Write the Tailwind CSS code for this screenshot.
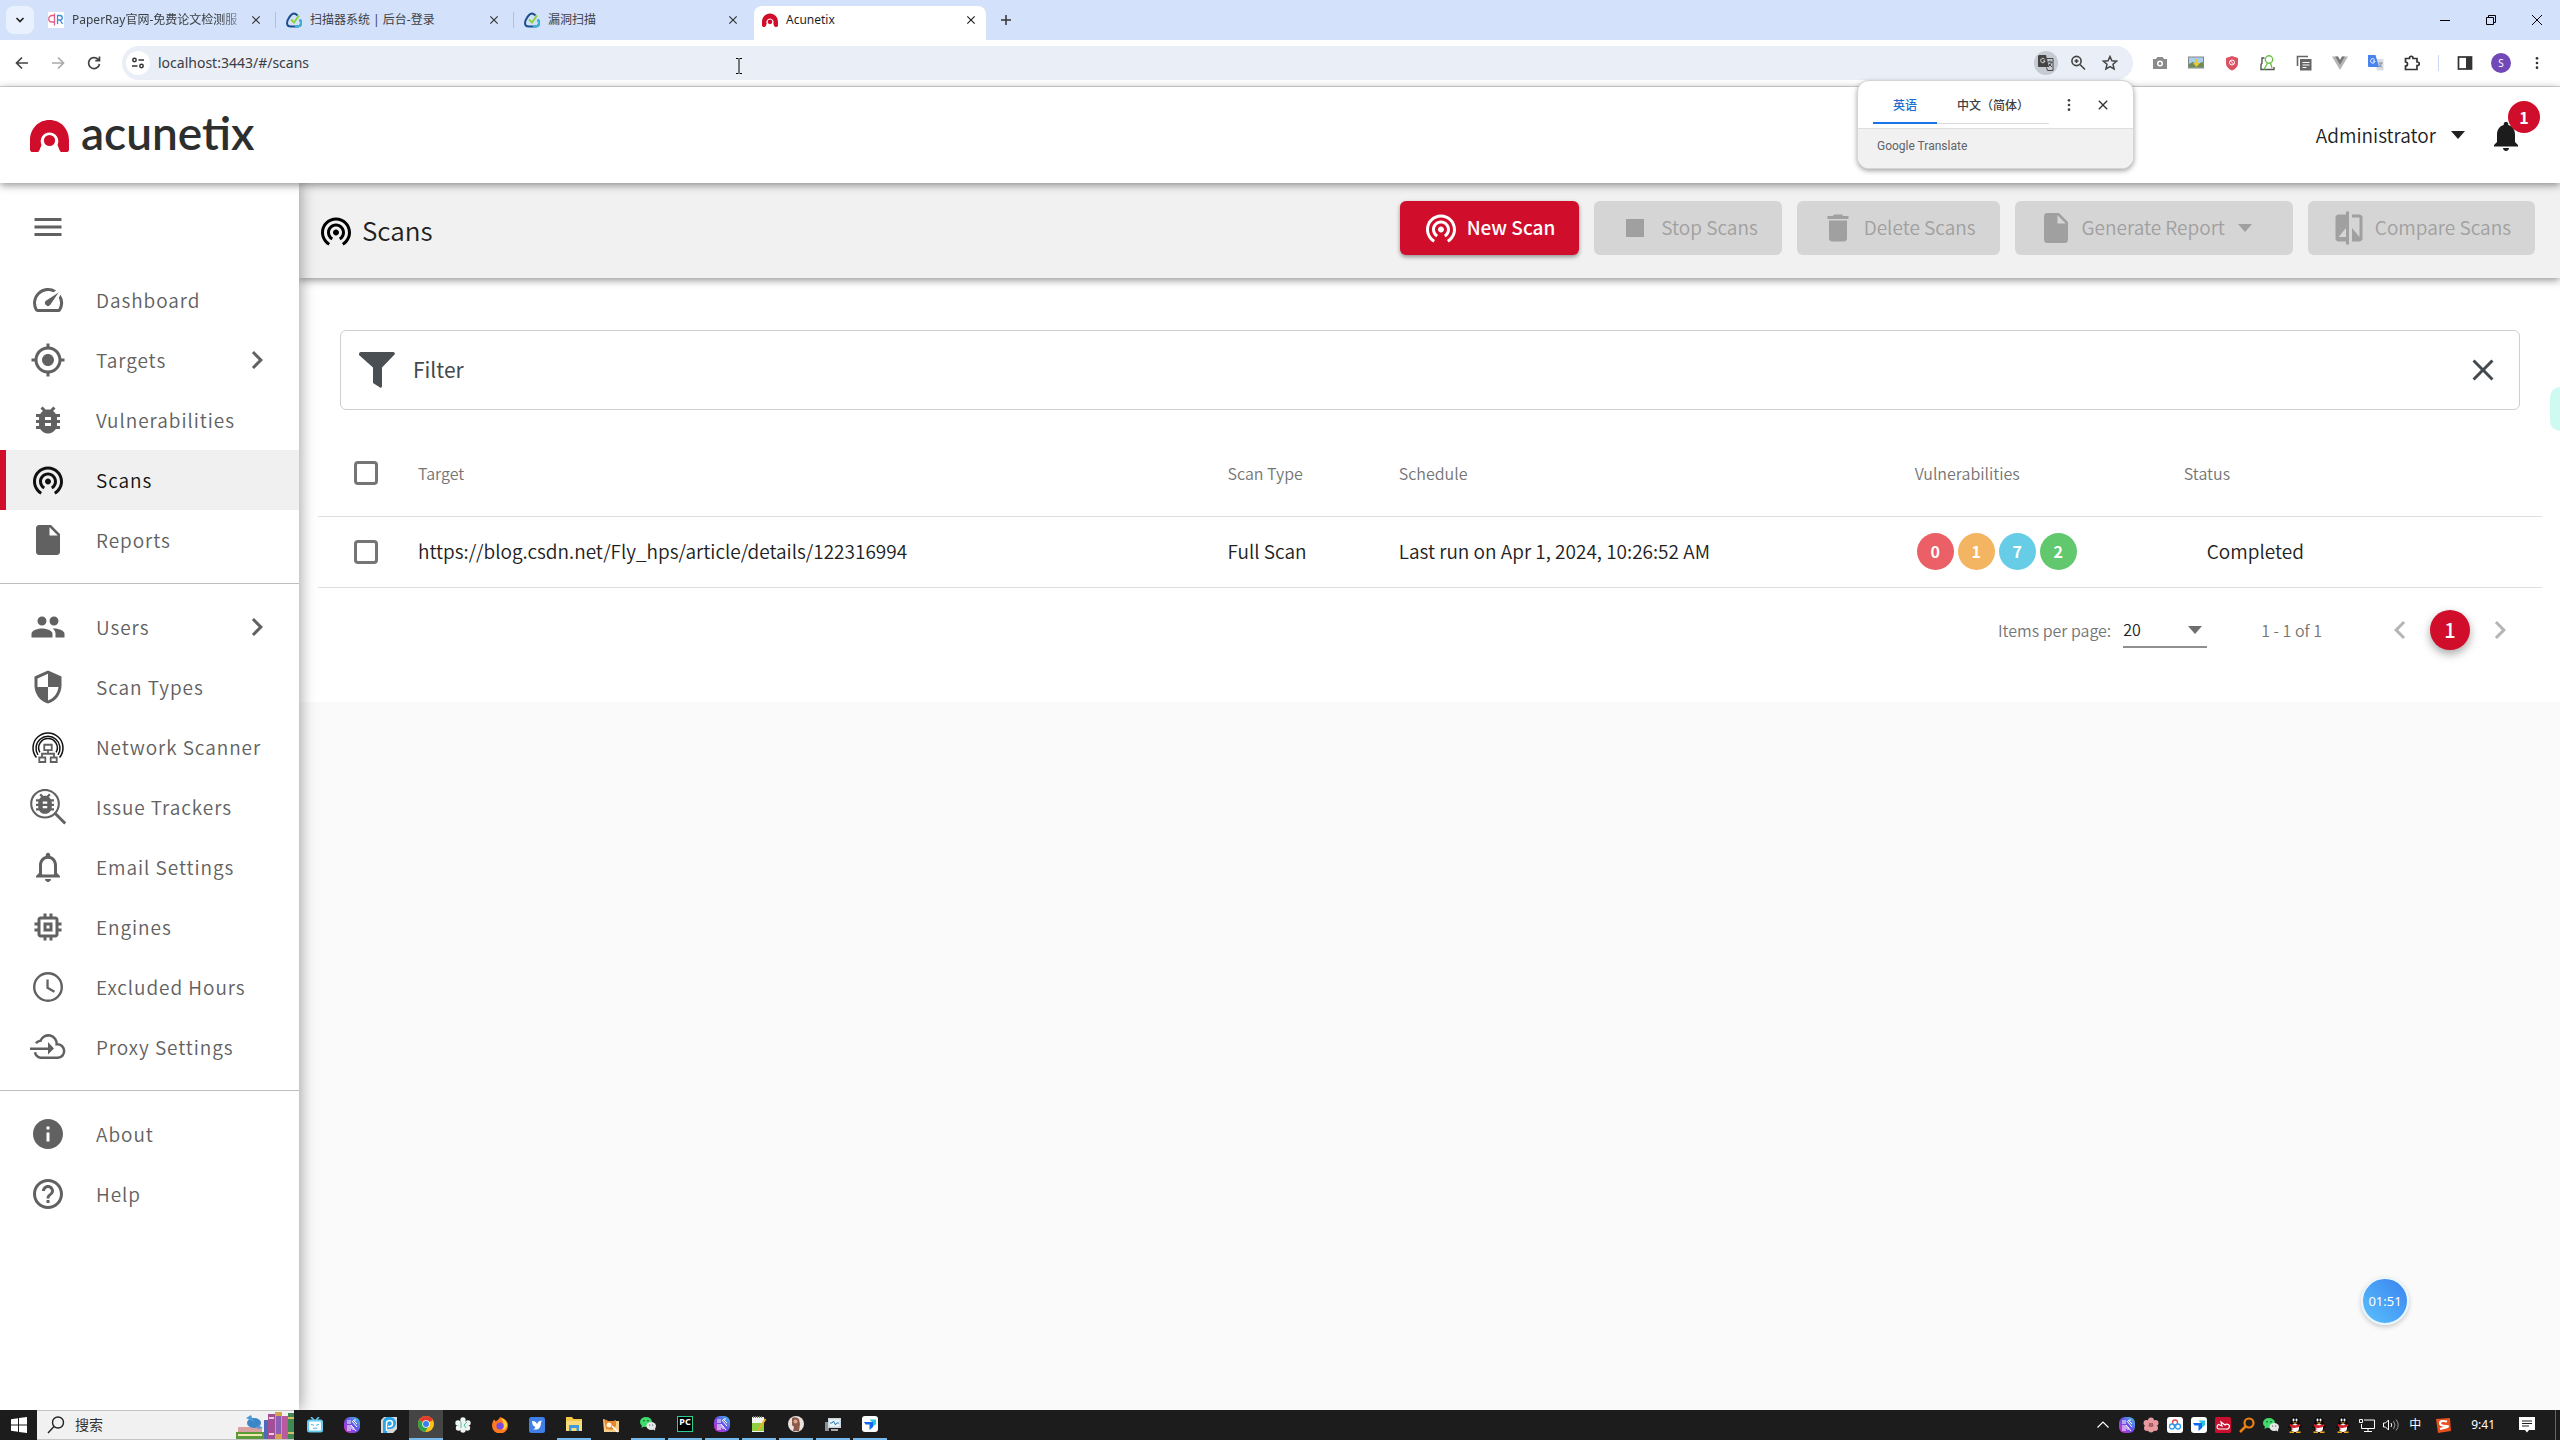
<!DOCTYPE html>
<html lang="en">
<head>
<meta charset="utf-8">
<title>Acunetix</title>
<script src="https://cdn.jsdelivr.net/npm/@tailwindcss/browser@4"></script>
</head>
<body class="min-h-screen flex flex-col bg-[#fafafa] font-['Noto_Sans_CJK_SC',sans-serif] text-[#212121]">

<svg class="absolute w-0 h-0" aria-hidden="true">
  <defs><linearGradient id="wg" x1="0" y1="1" x2="1" y2="0"><stop offset="0" stop-color="#d433c8"/><stop offset=".5" stop-color="#6a4ce8"/><stop offset="1" stop-color="#3cc6ea"/></linearGradient></defs>
  <symbol id="menu" viewBox="0 0 24 24"><path d="M3 18h18v-2H3v2zm0-5h18v-2H3v2zm0-7v2h18V6H3z"/></symbol>
  <symbol id="speed" viewBox="0 0 24 24"><path d="M20.38 8.57l-1.23 1.85a8 8 0 0 1-.22 7.58H5.07A8 8 0 0 1 15.58 6.85l1.85-1.23A10 10 0 0 0 3.35 19a2 2 0 0 0 1.72 1h13.85a2 2 0 0 0 1.74-1 10 10 0 0 0-.27-10.44zm-9.79 6.84a2 2 0 0 0 2.83 0l5.66-8.49-8.49 5.66a2 2 0 0 0 0 2.83z"/></symbol>
  <symbol id="target" viewBox="0 0 24 24"><path d="M12 8c-2.21 0-4 1.79-4 4s1.79 4 4 4 4-1.79 4-4-1.79-4-4-4zm8.94 3c-.46-4.17-3.77-7.48-7.94-7.94V1h-2v2.06C6.83 3.52 3.52 6.83 3.06 11H1v2h2.06c.46 4.17 3.77 7.48 7.94 7.94V23h2v-2.06c4.17-.46 7.48-3.77 7.94-7.94H23v-2h-2.06zM12 19c-3.87 0-7-3.13-7-7s3.13-7 7-7 7 3.13 7 7-3.13 7-7 7z"/></symbol>
  <symbol id="bug" viewBox="0 0 24 24"><path d="M20 8h-2.81c-.45-.78-1.07-1.45-1.82-1.96L17 4.41 15.59 3l-2.17 2.17C12.96 5.06 12.49 5 12 5s-.96.06-1.41.17L8.41 3 7 4.41l1.62 1.63C7.88 6.55 7.26 7.22 6.81 8H4v2h2.09c-.05.33-.09.66-.09 1v1H4v2h2v1c0 .34.04.67.09 1H4v2h2.81c1.04 1.79 2.97 3 5.19 3s4.15-1.21 5.19-3H20v-2h-2.09c.05-.33.09-.66.09-1v-1h2v-2h-2v-1c0-.34-.04-.67-.09-1H20V8zm-6 8h-4v-2h4v2zm0-4h-4v-2h4v2z"/></symbol>
  <symbol id="scan" viewBox="0 0 24 24"><path d="M12 11c-1.1 0-2 .9-2 2s.9 2 2 2 2-.9 2-2-.9-2-2-2zm6 2c0-3.31-2.69-6-6-6s-6 2.69-6 6c0 2.22 1.21 4.15 3 5.19l1-1.74c-1.19-.7-2-1.97-2-3.45 0-2.21 1.79-4 4-4s4 1.79 4 4c0 1.48-.81 2.75-2 3.45l1 1.74c1.79-1.04 3-2.97 3-5.19zM12 3C6.48 3 2 7.48 2 13c0 3.7 2.01 6.92 4.99 8.65l1-1.73C5.61 18.53 4 15.96 4 13c0-4.42 3.58-8 8-8s8 3.58 8 8c0 2.96-1.61 5.53-4 6.92l1 1.73c2.99-1.73 5-4.95 5-8.65 0-5.52-4.48-10-10-10z"/></symbol>
  <symbol id="file" viewBox="0 0 24 24"><path d="M6 2c-1.1 0-1.99.9-1.99 2L4 20c0 1.1.89 2 1.99 2H18c1.1 0 2-.9 2-2V8l-6-6H6zm7 7V3.5L18.5 9H13z"/></symbol>
  <symbol id="group" viewBox="0 0 24 24"><path d="M16 11c1.66 0 2.99-1.34 2.99-3S17.66 5 16 5c-1.66 0-3 1.34-3 3s1.34 3 3 3zm-8 0c1.66 0 2.99-1.34 2.99-3S9.66 5 8 5C6.34 5 5 6.34 5 8s1.34 3 3 3zm0 2c-2.33 0-7 1.17-7 3.5V19h14v-2.5c0-2.33-4.67-3.5-7-3.5zm8 0c-.29 0-.62.02-.97.05 1.16.84 1.97 1.97 1.97 3.45V19h6v-2.5c0-2.33-4.67-3.5-7-3.5z"/></symbol>
  <symbol id="shield" viewBox="0 0 24 24"><path d="M12 1L3 5v6c0 5.55 3.84 10.74 9 12 5.16-1.26 9-6.45 9-12V5l-9-4zm0 10.99h7c-.53 4.12-3.28 7.79-7 8.94V12H5V6.3l7-3.11v8.8z"/></symbol>
  <symbol id="network" viewBox="0 0 24 24"><g fill="none" stroke="#111" stroke-width="1"><path d="M4.300 19A10 10 0 1 1 19.700 19"/><path d="M5.300 17.200A8 8 0 1 1 18.700 17.200"/><path d="M6.600 15.600A6.200 6.200 0 1 1 17.400 15.600"/></g><g fill="none" stroke="currentColor" stroke-width="1.200"><path d="M9.500 10.500h5v3.600h-5zM12 14v2.500M8 19v-2.500h8V19"/><path d="M6.200 19h4v3h-4zM13.800 19h4v3h-4z"/></g></symbol>
  <symbol id="issue" viewBox="0 0 24 24"><circle cx="10" cy="9.800" r="9.200" fill="none" stroke="currentColor" stroke-width="1.400"/><path d="M17 16.500l6.500 6.500" stroke="currentColor" stroke-width="2"/><path transform="translate(1 .8) scale(.75)" d="M20 8h-2.810c-.45-.78-1.070-1.450-1.820-1.960L17 4.410 15.590 3l-2.170 2.170C12.960 5.060 12.490 5 12 5s-.96.06-1.410.17L8.410 3 7 4.410l1.620 1.630C7.880 6.550 7.260 7.220 6.810 8H4v2h2.090c-.05.33-.09.66-.09 1v1H4v2h2v1c0 .34.04.67.09 1H4v2h2.810c1.040 1.790 2.970 3 5.190 3s4.150-1.210 5.190-3H20v-2h-2.090c.05-.33.09-.66.09-1v-1h2v-2h-2v-1c0-.34-.04-.67-.09-1H20V8zm-6 8h-4v-2h4v2zm0-4h-4v-2h4v2z"/></symbol>
  <symbol id="bell-o" viewBox="0 0 24 24"><path d="M12 22c1.100 0 2-.9 2-2h-4c0 1.100.9 2 2 2zm6-6v-5c0-3.070-1.630-5.640-4.500-6.320V4c0-.83-.67-1.500-1.500-1.500s-1.500.67-1.500 1.500v.68C7.640 5.360 6 7.920 6 11v5l-2 2v1h16v-1l-2-2zm-2 1H8v-6c0-2.480 1.510-4.500 4-4.500s4 2.020 4 4.500v6z"/></symbol>
  <symbol id="bell" viewBox="0 0 24 24"><path d="M12 22c1.100 0 2-.9 2-2h-4c0 1.100.9 2 2 2zm6-6v-5c0-3.070-1.630-5.640-4.500-6.320V4c0-.83-.67-1.500-1.500-1.500s-1.500.67-1.500 1.500v.68C7.640 5.360 6 7.920 6 11v5l-2 2v1h16v-1l-2-2z"/></symbol>
  <symbol id="chip" viewBox="0 0 24 24"><path d="M15 9H9v6h6V9zm-2 4h-2v-2h2v2zm8-2V9h-2V7c0-1.100-.9-2-2-2h-2V3h-2v2h-2V3H9v2H7c-1.100 0-2 .9-2 2v2H3v2h2v2H3v2h2v2c0 1.100.9 2 2 2h2v2h2v-2h2v2h2v-2h2c1.100 0 2-.9 2-2v-2h2v-2h-2v-2h2zm-4 6H7V7h10v10z"/></symbol>
  <symbol id="clock" viewBox="0 0 24 24"><circle cx="12" cy="12" r="9.200" fill="none" stroke="currentColor" stroke-width="1.600"/><path d="M11.700 7v5.500l4.600 2.700" fill="none" stroke="currentColor" stroke-width="1.500"/></symbol>
  <symbol id="proxy" viewBox="0 0 24 24"><path d="M4 9.500C5 8 6.500 8 7 7.800A5.600 5.600 0 0 1 17.800 10.200A4.500 4.500 0 0 1 18.700 19.200H7A4.800 4.800 0 0 1 3.300 15.500" fill="none" stroke="currentColor" stroke-width="1.700"/><path d="M0 12.300h12V8.700l4 4.300-4 4v-3H0z"/></symbol>
  <symbol id="info" viewBox="0 0 24 24"><path d="M12 2C6.480 2 2 6.480 2 12s4.480 10 10 10 10-4.480 10-10S17.520 2 12 2zm1 15h-2v-6h2v6zm0-8h-2V7h2v2z"/></symbol>
  <symbol id="help" viewBox="0 0 24 24"><path d="M11 18h2v-2h-2v2zm1-16C6.480 2 2 6.480 2 12s4.480 10 10 10 10-4.480 10-10S17.520 2 12 2zm0 18c-4.410 0-8-3.590-8-8s3.590-8 8-8 8 3.590 8 8-3.590 8-8 8zm0-14c-2.210 0-4 1.790-4 4h2c0-1.100.9-2 2-2s2 .9 2 2c0 2-3 1.750-3 5h2c0-2.250 3-2.500 3-5 0-2.210-1.790-4-4-4z"/></symbol>
  <symbol id="compare" viewBox="0 0 24 24"><path d="M10 3H5c-1.100 0-2 .9-2 2v14c0 1.100.9 2 2 2h5v2h2V1h-2v2zm0 15H5l5-6v6zm9-15h-5v2h5v13l-5-6v9h5c1.100 0 2-.9 2-2V5c0-1.100-.9-2-2-2z"/></symbol>
  <symbol id="trash" viewBox="0 0 24 24"><path d="M6 19c0 1.100.9 2 2 2h8c1.100 0 2-.9 2-2V7H6v12zM19 4h-3.500l-1-1h-5l-1 1H5v2h14V4z"/></symbol>
  <symbol id="stop" viewBox="0 0 24 24"><path d="M6 6h12v12H6z"/></symbol>
  <symbol id="right" viewBox="0 0 24 24"><path d="M10 6L8.590 7.410 13.170 12l-4.580 4.590L10 18l6-6z"/></symbol>
  <symbol id="left" viewBox="0 0 24 24"><path d="M15.410 7.410L14 6l-6 6 6 6 1.410-1.410L10.830 12z"/></symbol>
  <symbol id="close" viewBox="0 0 24 24"><path d="M19 6.410L17.590 5 12 10.590 6.410 5 5 6.410 10.590 12 5 17.590 6.410 19 12 13.410 17.590 19 19 17.590 13.410 12z"/></symbol>
  <symbol id="caret" viewBox="0 0 24 24"><path d="M5 8h14l-7 8z"/></symbol>
  <symbol id="funnel" viewBox="0 0 36 36"><path d="M0 2Q0 0 2 0H34Q36 0 36 2L23 15.500V34.500Q22.500 36 21 35.600L14 31V15.500L0 3z"/></symbol>
  <symbol id="dots" viewBox="0 0 24 24"><circle cx="12" cy="5" r="2"/><circle cx="12" cy="12" r="2"/><circle cx="12" cy="19" r="2"/></symbol>
  <symbol id="logo" viewBox="0 0 39 32"><path d="M19.500 0C8 0 0 9 0 20.500V27a5 5 0 0 0 9.500 3l2-5a8.800 8.800 0 1 1 16 0l2 5A5 5 0 0 0 39 27V20.500C39 9 31 0 19.500 0z" fill="#d00e2b"/><circle cx="19.500" cy="20.500" r="5.600" fill="#d00e2b"/></symbol>
  <symbol id="drop" viewBox="0 0 16 16"><path d="M8 1.500C5 1.500 1 8 1 11c0 2 1.500 3.500 4 3.500h6c2.500 0 4-1.500 4-3.500 0-1-.5-2.500-1-3.500" fill="none" stroke="#1c4f8f" stroke-width="2"/><path d="M9 14.500h2c2.500 0 4-1.500 4-3.500 0-1-.5-2.500-1-3.500" fill="none" stroke="#3fb6d8" stroke-width="2"/><path d="M8 1.500c1.500 0 2.500 1 3.500 2" fill="none" stroke="#1c4f8f" stroke-width="2"/><path d="M5 7.500l3 3 5-7" fill="none" stroke="#8bd43c" stroke-width="2"/></symbol>
  <symbol id="weave" viewBox="0 0 16 16"><rect width="16" height="16" rx="6" fill="url(#wg)"/><path d="M4 3v4M6 3v4M3 9h5M3 11h5M8 4l5 6M9 3l4 4M7 8l5 6M9 13v-3M12 3h-2M3 13h4" stroke="#fff" fill="none"/></symbol>
  <symbol id="wechat" viewBox="0 0 16 14"><ellipse cx="6" cy="5" rx="6" ry="5" fill="#3fdc6c"/><path d="M2 8l-.5 3L5 9z" fill="#3fdc6c"/><ellipse cx="11.200" cy="9" rx="4.800" ry="4" fill="#e6e6e6"/><path d="M13 12l2 1.800.2-3z" fill="#e6e6e6"/><g fill="#143"><circle cx="4" cy="3.800" r=".8"/><circle cx="8" cy="3.800" r=".8"/><circle cx="9.700" cy="8" r=".6"/><circle cx="12.700" cy="8" r=".6"/></g></symbol>
  <symbol id="todesk" viewBox="0 0 16 16"><rect width="16" height="16" rx="3" fill="#fff"/><path d="M7.500 3.500H14v4.500l-3.500 3V6.500z" fill="#22c7dd"/><path d="M2 6h9v5l-3.500 3V8.500H3.500z" fill="#1269f0"/></symbol>
  <symbol id="qq" viewBox="0 0 16 16"><path d="M8 0c3 0 4.500 2 4.500 5l2.500 5-2 1c0 3-2 4-5 4s-5-1-5-4l-2-1 2.500-5C3.500 2 5 0 8 0z" fill="#0a0a0a"/><ellipse cx="8" cy="11" rx="4" ry="4" fill="#fff"/><path d="M3 7q5 2.500 10 0l.5 2Q8 12 5.500 10.500V13h-1.500V9.800L2.500 9z" fill="#d8202c"/><ellipse cx="6.500" cy="3" rx="1" ry="1.400" fill="#fff"/><ellipse cx="9.500" cy="3" rx="1" ry="1.400" fill="#fff"/><path d="M5.500 5.500h5L8 7zM2.500 14.500h4.500v1.500H2.500zM9 14.500h4.500v1.500H9z" fill="#f5a81c"/></symbol>
</svg>

<!-- Browser tab strip -->
<div class="h-10 flex items-center bg-[#d3e1fb] text-xs text-[#3c4043] font-['Noto_Sans','Noto_Sans_CJK_SC',sans-serif]">
  <button class="ml-1.5 w-7 h-7 rounded-lg bg-[#e9f1fe] flex items-center justify-center" aria-label="Search tabs"><svg class="w-2.5 h-2.5" viewBox="0 0 10 10"><path d="M1.500 3L5 6.500 8.500 3" fill="none" stroke="#222" stroke-width="1.700"/></svg></button>
  <div class="ml-1 w-[238px] h-4 flex items-center border-r border-[#a8c2f0] pl-2.5 pr-3">
    <svg class="w-4 h-4 shrink-0" viewBox="0 0 16 16"><rect width="16" height="16" fill="#fff"/><path d="M6.500 1.500v12M6.500 3.500H4A2.700 2.700 0 0 0 4 10h2.500" fill="none" stroke="#e25a86" stroke-width="1.300"/><path d="M9.500 12V3.500H12a2 2 0 0 1 0 4.500H9.500M12 8l2.500 4" fill="none" stroke="#3b8edb" stroke-width="1.300"/></svg>
    <span class="ml-2 flex-1 whitespace-nowrap mask-r-from-85%">PaperRay官网-免费论文检测服</span>
    <button class="shrink-0" aria-label="Close tab"><svg class="w-3.5 h-3.5" fill="#333"><use href="#close"/></svg></button>
  </div>
  <div class="w-[238px] h-4 flex items-center border-r border-[#a8c2f0] pl-2.5 pr-3">
    <svg class="w-4 h-4 shrink-0"><use href="#drop"/></svg>
    <span class="ml-2 flex-1 whitespace-nowrap">扫描器系统 | 后台-登录</span>
    <button aria-label="Close tab"><svg class="w-3.5 h-3.5" fill="#333"><use href="#close"/></svg></button>
  </div>
  <div class="w-[238px] h-4 flex items-center pl-2.5 pr-3">
    <svg class="w-4 h-4 shrink-0"><use href="#drop"/></svg>
    <span class="ml-2 flex-1 whitespace-nowrap">漏洞扫描</span>
    <button aria-label="Close tab"><svg class="w-3.5 h-3.5" fill="#333"><use href="#close"/></svg></button>
  </div>
  <div class="self-end w-[232px] ml-0.5 h-[34px] rounded-t-lg bg-white flex items-center pl-2 pr-2 pb-1.5 text-[#1f1f1f]">
    <svg class="w-4 h-3.5 shrink-0"><use href="#logo"/></svg>
    <span class="ml-2 flex-1">Acunetix</span>
    <button aria-label="Close tab"><svg class="w-3.5 h-3.5" fill="#222"><use href="#close"/></svg></button>
  </div>
  <button class="ml-3.5" aria-label="New tab"><svg class="w-3 h-3" viewBox="0 0 12 12"><path d="M6 1v10M1 6h10" stroke="#333" stroke-width="1.500"/></svg></button>
  <div class="ml-auto flex items-center gap-[34px] pr-[17px]">
    <button aria-label="Minimise"><svg class="w-3 h-3" viewBox="0 0 12 12"><path d="M1 6.500h10" stroke="#000"/></svg></button>
    <button aria-label="Restore"><svg class="w-3 h-3" viewBox="0 0 12 12" fill="none" stroke="#000"><path d="M1.500 3.500h7v7h-7zM3.500 3V1.500h7v7H9"/></svg></button>
    <button aria-label="Close window"><svg class="w-3 h-3" viewBox="0 0 12 12"><path d="M1 1l10 10M11 1L1 11" stroke="#000"/></svg></button>
  </div>
</div>

<!-- Toolbar -->
<div class="h-[47px] flex items-center bg-white border-b border-[#dcdcdc] font-['Noto_Sans',sans-serif]">
  <div class="flex items-center gap-5 pl-3.5 pr-5">
    <button aria-label="Back"><svg class="w-4 h-4" viewBox="0 0 16 16"><path d="M14 8H3M8 2.500L2.500 8 8 13.500" fill="none" stroke="#444" stroke-width="1.700"/></svg></button>
    <button aria-label="Forward"><svg class="w-4 h-4" viewBox="0 0 16 16"><path d="M2 8h11M8 2.500L13.500 8 8 13.500" fill="none" stroke="#aaa" stroke-width="1.700"/></svg></button>
    <button aria-label="Reload"><svg class="w-4 h-4" viewBox="0 0 16 16"><path d="M13.500 9A5.500 5.500 0 1 1 12 4.200L13.500 5.500M13.500 1.500v4.200h-4.200" fill="none" stroke="#444" stroke-width="1.700"/></svg></button>
  </div>
  <div class="flex-1 h-[34px] rounded-full bg-[#eaeef6] flex items-center pl-1 pr-[11px] gap-2">
    <button class="w-6 h-6 rounded-full bg-white flex items-center justify-center" aria-label="Site information"><svg class="w-3 h-3" viewBox="0 0 12 12" fill="none" stroke="#333" stroke-width="1.500"><circle cx="2.500" cy="3" r="1.700"/><path d="M6.500 3H12M0 9h5.500"/><circle cx="9.500" cy="9" r="1.700"/></svg></button>
    <input class="flex-1 bg-transparent outline-none text-sm text-[#3a3d42]" aria-label="Address" value="localhost:3443/#/scans">
    <button class="w-6 h-6 rounded-full bg-[#c5cad3] flex items-center justify-center" aria-label="Translate this page"><svg class="w-4 h-4" viewBox="0 0 16 16"><path d="M1 0h7l3 12H1a1 1 0 0 1-1-1V1z" fill="#444"/><path d="M6.800 4.500A2.200 2.200 0 1 0 7 6H5" fill="none" stroke="#ddd"/><path d="M9 3.500h6v12H9.500l-1-3M10 7h4.500M12 5.500V7M13.500 7q-.5 3-3.500 5M11 9l3 3" fill="none" stroke="#444"/></svg></button>
    <button class="w-6 h-6 flex items-center justify-center" aria-label="Zoom"><svg class="w-4 h-4" viewBox="0 0 16 16" fill="none" stroke="#444" stroke-width="1.600"><circle cx="6.500" cy="6" r="4.600"/><path d="M10 9.500l5 5M6.500 4v4M4.500 6h4"/></svg></button>
    <button class="w-6 h-6 flex items-center justify-center" aria-label="Bookmark"><svg class="w-4 h-4" viewBox="0 0 16 16"><path d="M8 1.500l1.900 4.300 4.700.4-3.600 3.100 1.100 4.600L8 11.500l-4.100 2.400L5 9.300 1.400 6.200l4.700-.4z" fill="none" stroke="#444" stroke-width="1.500"/></svg></button>
  </div>
  <div class="flex items-center gap-5 pl-[19px] pr-[15px]">
    <button aria-label="Screenshot"><svg class="w-4 h-4" viewBox="0 0 16 16"><path d="M1 4h3l1.500-2h5L12 4h3v10H1z" fill="#8a8a8a"/><circle cx="8" cy="8.500" r="3" fill="#fff"/><circle cx="8" cy="8.500" r="1.500" fill="#8a8a8a"/></svg></button>
    <button aria-label="Image downloader"><svg class="w-4 h-4" viewBox="0 0 16 16"><rect x=".5" y="2" width="15" height="11" fill="#a9cdec" stroke="#888"/><path d="M1 12.500V9l4-2 4 2 6-2v5.500z" fill="#6d8c55"/><path d="M7 4h3v4h2l-3.500 4L5 8h2z" fill="#f2c72b"/></svg></button>
    <button aria-label="Ad blocker"><svg class="w-4 h-4" viewBox="0 0 16 16"><path d="M8 1l6 2v5c0 3.500-2.500 6-6 7.500C4.500 14 2 11.500 2 8V3z" fill="#db5264"/><circle cx="8" cy="7.500" r="2.500" fill="none" stroke="#fff"/><path d="M6.500 6l3 3" stroke="#fff"/></svg></button>
    <button aria-label="Inspector"><svg class="w-4 h-4" viewBox="0 0 16 16" fill="none" stroke-width="1.400"><path d="M4.500 3H2v5l-1 1.500V14.500h13V12" stroke="#555"/><circle cx="9" cy="4.500" r="3.700" stroke="#6cc04a"/><path d="M7.500 8L4 14.500M10.500 8l1.500 5" stroke="#6cc04a"/></svg></button>
    <button aria-label="Copy pages"><svg class="w-4 h-4" viewBox="0 0 16 16"><path d="M1.500 11V1.500H12" fill="none" stroke="#666" stroke-width="1.600"/><rect x="4" y="4" width="11.500" height="11.500" fill="#666"/><path d="M6.500 7.500h7M6.500 10h7M6.500 12.500h4" stroke="#fff"/></svg></button>
    <button aria-label="Vue devtools"><svg class="w-4 h-4" viewBox="0 0 16 16"><path d="M0 1.500h6L8 5l2-3.500h6L8 15z" fill="#b5b5b5"/><path d="M3.200 1.500H6L8 5l2-3.500h2.800L8 9.800z" fill="#777"/></svg></button>
    <button aria-label="Google Translate"><svg class="w-4 h-4" viewBox="0 0 16 16"><path d="M6 4h9.500v11.500H9z" fill="#d9dde3"/><path d="M0 0h7.500L11 12H1a1 1 0 0 1-1-1z" fill="#4a83ec"/><path d="M6.500 4.500A2.200 2.200 0 1 0 7 6H5" fill="none" stroke="#fff"/><path d="M10.500 8h4M13.500 8q-.5 3-2.500 4M11 9.500l3 3" fill="none" stroke="#7a8694"/></svg></button>
    <button aria-label="Extensions"><svg class="w-4 h-4" viewBox="0 0 16 16"><path d="M1.500 3.500h4V3a1.500 1.500 0 0 1 3.500 0v.5h4V7h.5a1.500 1.500 0 0 1 0 3.500H13v4H1.500V11a2 2 0 0 0 0-4z" fill="none" stroke="#333" stroke-width="1.700"/></svg></button>
    <div class="w-px h-4 bg-[#c9d8f5] -mx-0.5"></div>
    <button aria-label="Side panel"><svg class="w-4 h-4" viewBox="0 0 16 16"><rect x="1.500" y="2" width="13" height="12" fill="#fff" stroke="#333" stroke-width="1.700"/><path d="M9 2h5.500v12H9z" fill="#333"/></svg></button>
    <button class="w-5 h-5 -mx-0.5 rounded-full bg-[#7248b9] text-white text-[10px] leading-5" aria-label="Profile">S</button>
    <button aria-label="Browser menu"><svg class="w-4 h-4" fill="#333"><use href="#dots"/></svg></button>
  </div>
</div>

<!-- Application header -->
<header class="relative z-30 h-24 flex items-center bg-white shadow-[0_2px_8px_rgba(0,0,0,0.45)] pl-[30px] pr-[36px]">
  <a href="#" class="flex items-center gap-3 pt-0.5" aria-label="Acunetix home">
    <svg class="w-[39px] h-8"><use href="#logo"/></svg>
    <span class="font-['Lato',sans-serif] font-semibold text-[46px] leading-[48px] text-[#2d2f2f] pb-1.5">acunetix</span>
  </a>
  <button class="ml-auto flex items-center gap-2.5 text-[19px] font-[350]">Administrator <svg class="w-6 h-6" fill="currentColor"><use href="#caret"/></svg></button>
  <button class="relative ml-[18px] pt-0.5" aria-label="Notifications"><svg class="w-9 h-9" fill="#1c1c1c"><use href="#bell"/></svg>
    <span class="absolute -top-[15px] left-5 w-8 h-8 rounded-full bg-[#d00e2b] text-white text-base font-bold leading-8 text-center">1</span></button>
</header>

<div class="flex-1 flex">
  <!-- Sidebar -->
  <nav class="relative z-20 w-[299px] shrink-0 bg-white shadow-[2px_0_14px_rgba(0,0,0,0.35)] text-[#616161] text-[19px] font-[350] tracking-wider fill-current" aria-label="Main">
    <button class="block ml-[30px] mt-[26px] mb-[25px]" aria-label="Toggle menu"><svg class="w-9 h-9"><use href="#menu"/></svg></button>
    <a href="#" class="flex items-center gap-[30px] h-[60px] px-[30px]"><svg class="w-9 h-9"><use href="#speed"/></svg>Dashboard</a>
    <a href="#" class="flex items-center gap-[30px] h-[60px] px-[30px]"><svg class="w-9 h-9"><use href="#target"/></svg>Targets<svg class="ml-auto -mr-1.5 w-9 h-9"><use href="#right"/></svg></a>
    <a href="#" class="flex items-center gap-[30px] h-[60px] px-[30px]"><svg class="w-9 h-9"><use href="#bug"/></svg>Vulnerabilities</a>
    <a href="#" class="flex items-center gap-[30px] h-[60px] pl-6 pr-[30px] border-l-6 border-[#d00e2b] bg-[#f0f0f0] text-[#111]" aria-current="page"><svg class="w-9 h-9"><use href="#scan"/></svg>Scans</a>
    <a href="#" class="flex items-center gap-[30px] h-[60px] px-[30px]"><svg class="w-9 h-9"><use href="#file"/></svg>Reports</a>
    <hr class="border-[#bdbdbd] my-[13px]">
    <a href="#" class="flex items-center gap-[30px] h-[60px] px-[30px]"><svg class="w-9 h-9"><use href="#group"/></svg>Users<svg class="ml-auto -mr-1.5 w-9 h-9"><use href="#right"/></svg></a>
    <a href="#" class="flex items-center gap-[30px] h-[60px] px-[30px]"><svg class="w-9 h-9"><use href="#shield"/></svg>Scan Types</a>
    <a href="#" class="flex items-center gap-[30px] h-[60px] px-[30px] whitespace-nowrap"><svg class="w-9 h-9"><use href="#network"/></svg>Network Scanner</a>
    <a href="#" class="flex items-center gap-[30px] h-[60px] px-[30px]"><svg class="w-9 h-9"><use href="#issue"/></svg>Issue Trackers</a>
    <a href="#" class="flex items-center gap-[30px] h-[60px] px-[30px]"><svg class="w-9 h-9"><use href="#bell-o"/></svg>Email Settings</a>
    <a href="#" class="flex items-center gap-[30px] h-[60px] px-[30px]"><svg class="w-9 h-9"><use href="#chip"/></svg>Engines</a>
    <a href="#" class="flex items-center gap-[30px] h-[60px] px-[30px]"><svg class="w-9 h-9"><use href="#clock"/></svg>Excluded Hours</a>
    <a href="#" class="flex items-center gap-[30px] h-[60px] px-[30px]"><svg class="w-9 h-9"><use href="#proxy"/></svg>Proxy Settings</a>
    <hr class="border-[#bdbdbd] my-[13px]">
    <a href="#" class="flex items-center gap-[30px] h-[60px] px-[30px]"><svg class="w-9 h-9"><use href="#info"/></svg>About</a>
    <a href="#" class="flex items-center gap-[30px] h-[60px] px-[30px]"><svg class="w-9 h-9"><use href="#help"/></svg>Help</a>
  </nav>

  <main class="flex-1 min-w-0">
    <div class="relative z-10 h-[95px] flex items-center bg-[#f1f1f1] shadow-[0_2px_8px_rgba(0,0,0,0.45)] pl-[19px] pr-[25px]">
      <svg class="w-9 h-9"><use href="#scan"/></svg>
      <h1 class="ml-2 text-[26px] leading-8 pb-0.5 font-[350]">Scans</h1>
      <div class="ml-auto flex gap-[15px] text-[19px] fill-current pb-1.5">
        <button class="h-[54px] rounded-md bg-[#d00e2b] text-white font-medium flex items-center gap-2 pl-[23px] pr-6 shadow-[0_2px_4px_rgba(0,0,0,0.4)]"><svg class="w-9 h-9"><use href="#scan"/></svg>New Scan</button>
        <button disabled class="h-[54px] rounded-md bg-[#d5d5d5] text-[#a0a0a0] font-[350] flex items-center gap-2 pl-[23px] pr-6"><svg class="w-9 h-9"><use href="#stop"/></svg>Stop Scans</button>
        <button disabled class="h-[54px] rounded-md bg-[#d5d5d5] text-[#a0a0a0] font-[350] flex items-center gap-2 pl-[23px] pr-6"><svg class="w-9 h-9"><use href="#trash"/></svg>Delete Scans</button>
        <button disabled class="h-[54px] rounded-md bg-[#d5d5d5] text-[#a0a0a0] font-[350] flex items-center gap-2 pl-[23px] pr-6"><svg class="w-9 h-9"><use href="#file"/></svg>Generate Report<svg class="w-6 h-6 mr-3"><use href="#caret"/></svg></button>
        <button disabled class="h-[54px] rounded-md bg-[#d5d5d5] text-[#a0a0a0] font-[350] flex items-center gap-2 pl-[23px] pr-6"><svg class="w-9 h-9"><use href="#compare"/></svg>Compare Scans</button>
      </div>
    </div>

    <section class="bg-white pt-[52px] pb-[30px]">
      <div class="ml-[41px] mr-10 h-20 border border-[#cfcfcf] rounded-md flex items-center pl-[18px] pr-[18px] gap-[18px]">
        <svg class="w-9 h-9" fill="#4a4f54"><use href="#funnel"/></svg>
        <input class="flex-1 outline-none text-[21px] text-[#424a50] placeholder-[#424a50]" aria-label="Filter" placeholder="Filter">
        <button aria-label="Clear filter"><svg class="w-9 h-9" fill="#424a50"><use href="#close"/></svg></button>
      </div>

      <table class="ml-[19px] mr-[18px] w-[calc(100%-37px)] mt-5 table-fixed text-left">
        <colgroup><col class="w-[100px]"><col class="w-[36.4%]"><col class="w-[7.7%]"><col class="w-[23.2%]"><col class="w-[12.1%]"><col></colgroup>
        <thead>
          <tr class="h-[86px] border-b border-[#dedede] text-[#757575] text-base">
            <th class="pl-9"><input type="checkbox" aria-label="Select all" class="block appearance-none w-6 h-6 border-3 border-[#757575] rounded-sm"></th>
            <th class="font-[350]">Target</th><th class="font-[350]">Scan Type</th><th class="font-[350]">Schedule</th><th class="font-[350]">Vulnerabilities</th><th class="font-[350]">Status</th>
          </tr>
        </thead>
        <tbody>
          <tr class="h-[71px] border-b border-[#dedede] text-[19px] font-[350]">
            <td class="pl-9"><input type="checkbox" aria-label="Select scan" class="block appearance-none w-6 h-6 border-3 border-[#757575] rounded-sm"></td>
            <td>https://blog.csdn.net/Fly_hps/article/details/122316994</td>
            <td>Full Scan</td>
            <td>Last run on Apr 1, 2024, 10:26:52 AM</td>
            <td><div class="flex gap-1 pl-0.5 text-base font-bold text-white text-center leading-9">
              <span class="w-[37px] h-[37px] rounded-full bg-[#eb5f66]">0</span><span class="w-[37px] h-[37px] rounded-full bg-[#f3b562]">1</span><span class="w-[37px] h-[37px] rounded-full bg-[#67cde6]">7</span><span class="w-[37px] h-[37px] rounded-full bg-[#61c86e]">2</span></div></td>
            <td class="pl-[23px]">Completed</td>
          </tr>
        </tbody>
      </table>

      <div class="flex items-center justify-end h-[84px] mr-[42px] text-base font-[350] text-[#757575]">
        <label for="per-page">Items per page:</label>
        <div class="relative ml-3 w-[84px] h-9 border-b-2 border-[#8f8f8f]">
          <select id="per-page" class="appearance-none w-full h-full outline-none bg-transparent text-[#212121]"><option>20</option></select>
          <svg class="absolute right-0 top-1.5 w-6 h-6 pointer-events-none" fill="#6e6e6e"><use href="#caret"/></svg>
        </div>
        <span class="ml-[54px]">1 - 1 of 1</span>
        <button class="ml-[60px]" aria-label="Previous page"><svg class="w-9 h-9" fill="#b5b5b5"><use href="#left"/></svg></button>
        <button class="ml-3 w-10 h-10 rounded-full bg-[#d00e2b] text-white text-xl font-medium shadow-[0_4px_10px_rgba(0,0,0,0.35)]">1</button>
        <button class="ml-3" aria-label="Next page"><svg class="w-9 h-9" fill="#b5b5b5"><use href="#right"/></svg></button>
      </div>
    </section>
  </main>
</div>

<!-- Taskbar -->
<footer class="relative z-40 h-[30px] flex items-center bg-[#1c1c1c] text-white font-['Noto_Sans','Noto_Sans_CJK_SC',sans-serif] text-sm">
  <button class="w-[37px] h-full flex items-center justify-center" aria-label="Start"><svg class="w-4 h-4" viewBox="0 0 16 16" fill="#fff"><path d="M0 2.200l7-1v6.300H0zM8 1l8-1v7.500H8zM0 8.500h7v6.300l-7-1zM8 8.500h8V16l-8-1z"/></svg></button>
  <div class="w-[257px] h-full bg-[#f1f1f1] border-y border-[#c4c4c4] flex items-center pl-2.5 gap-2.5">
    <svg class="w-[18px] h-[18px]" viewBox="0 0 18 18"><circle cx="11" cy="6.500" r="5.500" fill="none" stroke="#222" stroke-width="1.400"/><path d="M7 10.500L1 17" stroke="#222" stroke-width="1.400"/></svg>
    <input class="w-36 bg-transparent outline-none placeholder-[#333]" aria-label="搜索" placeholder="搜索">
    <svg class="ml-auto w-[58px] h-7" viewBox="0 0 58 28"><path d="M2 16h24v6H2z" fill="#d9a2a0"/><path d="M0 21h28v7H0z" fill="#5c9a3a"/><path d="M2 23h24v2H2z" fill="#f1e9b0"/><ellipse cx="18" cy="12" rx="7" ry="5" fill="#3c86c8"/><path d="M10 7l5-3 3 7zM22 14l5 3-6 1z" fill="#4d9adb"/><path d="M28 9h4v19h-4z" fill="#4f68b8"/><path d="M32 3h7v25h-7z" fill="#a34f95"/><path d="M33 6h5v2h-5zM33 22h5v2h-5z" fill="#f0c8dd"/><path d="M39 1h7v27h-7z" fill="#d4a54c"/><path d="M40 5h5v18h-5z" fill="#8a5fb5"/><path d="M46 5h6v23h-6z" fill="#b85a9c"/><path d="M52 2h6v26h-6z" fill="#3f8a52"/><path d="M52 6h6v2h-6zM52 21h6v2h-6z" fill="#d7c065"/></svg>
  </div>
  <div class="flex h-full ml-[4px] gap-[3px]">
    <button class="w-[34px] flex items-center justify-center" aria-label="Bilibili"><svg class="w-4 h-4" viewBox="0 0 16 16"><path d="M4 0l3 3M12 0L9 3" stroke="#66cdf0" stroke-width="1.500"/><rect y="2.500" width="16" height="13" rx="2.500" fill="#66cdf0"/><rect x="2" y="4.500" width="12" height="9" rx="1" fill="#fff"/><path d="M4 7.500l3 .7M12 7.500l-3 .7M6 11q1 1 2 0 1 1 2 0" fill="none" stroke="#49b6df"/></svg></button>
    <button class="w-[34px] flex items-center justify-center" aria-label="Weave"><svg class="w-4 h-4"><use href="#weave"/></svg></button>
    <button class="w-[34px] flex items-center justify-center" aria-label="Pixso"><svg class="w-4 h-4" viewBox="0 0 16 16"><path d="M3 0h13v12l-4 4H0V3z" fill="#d8d8d8"/><path d="M2 16V5a5 5 0 0 1 5-5h2a6 6 0 0 1 0 12H6v4z" fill="#28a5e8"/><path d="M5.500 14V6.500A3 3 0 1 1 8.500 9.500H7" fill="none" stroke="#fff" stroke-width="1.500"/></svg></button>
    <button class="w-[34px] flex items-center justify-center bg-[#454545] border-b-2 border-[#76b9ed]" aria-label="Chrome"><svg class="w-4 h-4" viewBox="0 0 16 16"><circle cx="8" cy="8" r="8" fill="#fbc116"/><path d="M8 8L1.100 4A8 8 0 0 1 14.900 4z" fill="#e33b2e"/><path d="M8 8L1.100 4A8 8 0 0 0 7 15.900L11 9.500z" fill="#2ba24c"/><circle cx="8" cy="8" r="3.800" fill="#fff"/><circle cx="8" cy="8" r="3" fill="#3a7ff0"/></svg></button>
    <button class="w-[34px] flex items-center justify-center" aria-label="Pinwheel"><svg class="w-4 h-4" viewBox="0 0 16 16"><g fill="#eef6f4"><circle cx="8" cy="3" r="2.700"/><circle cx="8" cy="13" r="2.700"/><circle cx="3" cy="6" r="2.700"/><circle cx="13" cy="6" r="2.700"/><circle cx="3.500" cy="11" r="2.700"/><circle cx="12.500" cy="11" r="2.700"/><circle cx="8" cy="8" r="4"/></g><path d="M6 5v6M9 8l3-3M9 8l2 3" stroke="#57b8a6"/></svg></button>
    <button class="w-[34px] flex items-center justify-center" aria-label="Firefox"><svg class="w-4 h-4" viewBox="0 0 16 16"><path d="M8 0c3 1 8 3 8 8.500A8 8 0 0 1 0 8.500C0 6 1 4 2 2.500l2 2C5 3 7 3 8 0z" fill="#ff7a1f"/><path d="M9 1c4 1.500 6.500 4 6 8-1 3-3 4-5 4 3-3 2-7-1-12z" fill="#ffd23a"/><circle cx="8" cy="9" r="3.600" fill="#7a4be0"/></svg></button>
    <button class="w-[34px] flex items-center justify-center" aria-label="Bird"><svg class="w-4 h-4" viewBox="0 0 16 16"><rect width="16" height="16" rx="2.500" fill="#3f7fe8"/><path d="M3 4q4 0 5 3 1-3 3-3l2-.5-1 2q0 6-4 7H4q2-1 2.500-2.500Q3 9 3 4z" fill="#fff"/></svg></button>
    <button class="w-[34px] flex items-center justify-center border-b-2 border-[#76b9ed]" aria-label="File Explorer"><svg class="w-4 h-4" viewBox="0 0 16 16"><path d="M0 1h6l1.500 2H16v12H0z" fill="#f5c84c"/><path d="M0 5h16v10H0z" fill="#fbdc7c"/><path d="M3 15V9h10v6h-2.500v-3h-5v3z" fill="#3f9bd9"/></svg></button>
    <button class="w-[34px] flex items-center justify-center" aria-label="Everything"><svg class="w-4 h-4" viewBox="0 0 16 16"><path d="M0 2l5 2h11v11H1z" fill="#f6cf8f"/><path d="M1 2l4 2h5l3-1v6l-4 4-6-1z" fill="#e8862c"/><circle cx="6" cy="8" r="2.500" fill="#fff3dc"/><path d="M9 9l6 6" stroke="#fff" stroke-width="1.500"/></svg></button>
    <button class="w-[34px] flex items-center justify-center border-b-2 border-[#76b9ed]" aria-label="WeChat"><svg class="w-4 h-4"><use href="#wechat"/></svg></button>
    <button class="w-[34px] flex items-center justify-center border-b-2 border-[#76b9ed]" aria-label="PyCharm"><span class="w-4 h-4 bg-black border border-[#27cf92] text-[9px] leading-[10px] font-bold">PC</span></button>
    <button class="w-[34px] flex items-center justify-center border-b-2 border-[#76b9ed]" aria-label="Weave window"><svg class="w-4 h-4"><use href="#weave"/></svg></button>
    <button class="w-[34px] flex items-center justify-center border-b-2 border-[#76b9ed]" aria-label="Notepad++"><svg class="w-4 h-4" viewBox="0 0 16 16"><rect x="1" y="1" width="12" height="15" fill="#f4f4ee"/><path d="M1 7h12v8H1z" fill="#8ed03f"/><path d="M2 1h10" stroke="#777" stroke-width="2" stroke-dasharray="1 1"/><path d="M14.500 3l-6 9-1.500 2" stroke="#e8b428" stroke-width="2"/></svg></button>
    <button class="w-[34px] flex items-center justify-center border-b-2 border-[#76b9ed]" aria-label="Avatar app"><svg class="w-4 h-4" viewBox="0 0 16 16"><circle cx="8" cy="8" r="8" fill="#e9e2dd"/><path d="M4 2q4-2 7 1l1 5-1 7H5l1-4-2-2z" fill="#8c5a4c"/><circle cx="7.500" cy="5.500" r="2" fill="#d9a58c"/></svg></button>
    <button class="w-[34px] flex items-center justify-center border-b-2 border-[#76b9ed]" aria-label="Monitor"><svg class="w-4 h-4" viewBox="0 0 16 16"><path d="M0 6h4v9H0z" fill="#8a9196"/><rect x="3" y="2" width="13" height="10" fill="#cfd6da"/><rect x="4.500" y="3.500" width="10" height="7" fill="#eaf7ff"/><path d="M5 7h2l1.500-2 2 4 1-2H14" fill="none" stroke="#2b7db5"/><path d="M6 13h7v2H6z" fill="#aaa"/></svg></button>
    <button class="w-[34px] flex items-center justify-center border-b-2 border-[#76b9ed]" aria-label="ToDesk"><svg class="w-4 h-4"><use href="#todesk"/></svg></button>
  </div>
  <div class="ml-auto flex items-center gap-2 h-full">
    <svg class="w-4 h-4" viewBox="0 0 16 16"><path d="M2.500 10.500L8 5l5.500 5.500" fill="none" stroke="#fff" stroke-width="1.200"/></svg>
    <svg class="w-4 h-4"><use href="#weave"/></svg>
    <svg class="w-4 h-4" viewBox="0 0 16 16"><g fill="#e79a9f"><circle cx="8" cy="3.500" r="3"/><circle cx="8" cy="12.500" r="3"/><circle cx="3.500" cy="6" r="3"/><circle cx="12.500" cy="6" r="3"/><circle cx="4" cy="11" r="3"/><circle cx="12" cy="11" r="3"/></g><circle cx="8" cy="8" r="2" fill="#b9616c"/></svg>
    <svg class="w-4 h-4" viewBox="0 0 16 16"><rect width="16" height="16" rx="3" fill="#fff"/><circle cx="8" cy="5.500" r="2.500" fill="none" stroke="#e8474d" stroke-width="1.300"/><circle cx="5" cy="9.500" r="2.500" fill="none" stroke="#2c9df0" stroke-width="1.300"/><circle cx="11" cy="9.500" r="2.500" fill="none" stroke="#2c9df0" stroke-width="1.300"/></svg>
    <svg class="w-4 h-4"><use href="#todesk"/></svg>
    <svg class="w-4 h-4" viewBox="0 0 16 16"><rect width="16" height="16" rx="1.500" fill="#c8102e"/><path d="M3.500 12A2.500 2.500 0 0 1 3.500 7.500L7 9 6 5l4 3a2.500 2.500 0 1 1 1 4z" fill="none" stroke="#fff" stroke-width="1.200"/></svg>
    <svg class="w-4 h-4" viewBox="0 0 16 16"><circle cx="10" cy="6" r="4.500" fill="none" stroke="#ee8013" stroke-width="2.200"/><path d="M6.500 9.500L1 15" stroke="#ee8013" stroke-width="2.500"/></svg>
    <svg class="w-4 h-4"><use href="#wechat"/></svg>
    <svg class="w-4 h-4"><use href="#qq"/></svg>
    <svg class="w-4 h-4"><use href="#qq"/></svg>
    <svg class="w-4 h-4"><use href="#qq"/></svg>
    <svg class="w-4 h-4" viewBox="0 0 16 16" fill="none" stroke="#fff"><path d="M5 3h10.500v8.500H2.500V7M5 14.500h8M9 11.500v3M.5 2.500h3v3h-3z"/></svg>
    <svg class="w-4 h-4" viewBox="0 0 16 16" fill="none" stroke="#fff"><path d="M.5 6h2l3-3v10l-3-3h-2zM8 6q1.500 2 0 4"/><path d="M10.500 4q3 4 0 8M13 2.500q4.500 5.500 0 11" stroke="#999"/></svg>
    <span class="text-xs w-4 text-center">中</span>
    <svg class="w-4 h-4 ml-1" viewBox="0 0 16 16"><path d="M1 2l14-1 1 13-13 2z" fill="#e8501f"/><path d="M12 4.500Q5 3 5 6t6 3-6 3" fill="none" stroke="#fff" stroke-width="2.200"/></svg>
    <time class="ml-3 text-xs">9:41</time>
    <svg class="w-4 h-4 ml-4" viewBox="0 0 16 16"><path d="M0 0h16v13h-6l-2 2.500L6 13H0z" fill="#fff"/><path d="M3 4h10M3 6.500h10M3 9h7" stroke="#1c1c1c"/></svg>
    <div class="w-px h-full bg-[#666] ml-3 mr-1"></div>
  </div>
</footer>

<!-- Text cursor over the address bar -->
<svg class="absolute z-50 left-[735px] top-[58px] w-2 h-4" viewBox="0 0 8 16"><path d="M1 .5h2.500M4.500 .5H7M4 1v14M1 15.500h2.500M4.500 15.500H7" stroke="#000" fill="none"/></svg>

<!-- Translate bubble -->
<aside class="absolute z-50 right-[426px] top-20 w-[277px] h-[89px] rounded-xl bg-white border border-[#d5d5d5] shadow-[0_2px_5px_rgba(0,0,0,0.35)] overflow-hidden flex flex-col font-['Noto_Sans','Noto_Sans_CJK_SC',sans-serif] text-xs">
  <div class="h-12 flex items-center pl-[15px] border-b border-[#dedede]">
    <button class="w-16 h-[30px] mt-2 pb-1 font-medium text-[#1c6fd0] border-b-2 border-[#1a73e8]">英语</button>
    <button class="w-28 h-[30px] mt-2 pb-1 font-medium text-[#3c4043] border-b border-[#dadce0]">中文（简体）</button>
    <button class="ml-3" aria-label="Translate options"><svg class="w-4 h-4" fill="#444"><use href="#dots"/></svg></button>
    <button class="ml-[18px]" aria-label="Close translate"><svg class="w-4 h-4" fill="#333"><use href="#close"/></svg></button>
  </div>
  <p class="flex-1 bg-[#f1f1f1] pl-[19px] pt-[9px] text-[#5f6368] font-['Roboto',sans-serif]">Google Translate</p>
</aside>

<!-- Screen recorder timer and edge handle -->
<div class="absolute z-50 right-[151px] bottom-[115px] w-12 h-12 rounded-full border-2 border-[#e8f6ff] bg-linear-to-tr from-[#5cc1fb] to-[#3b82ef] shadow-[0_2px_5px_rgba(0,0,0,0.2)] text-white text-[13px] leading-11 text-center font-['Noto_Sans',sans-serif]">01:51</div>
<div class="absolute z-50 right-0 top-[387px] w-2.5 h-11 rounded-l-full bg-[#cffaf2]"></div>

</body>
</html>
